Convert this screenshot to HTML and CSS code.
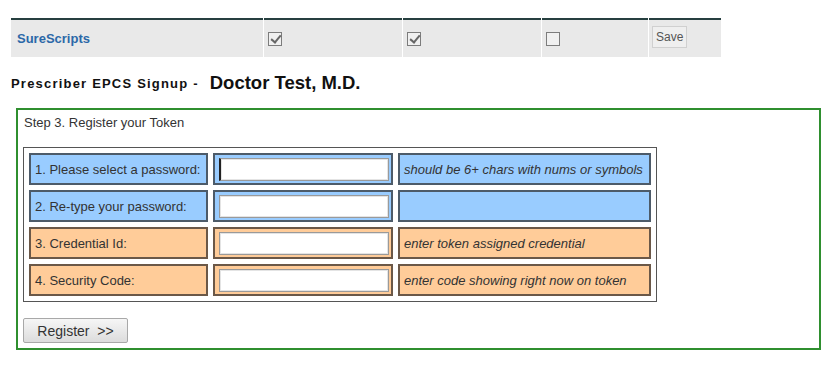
FILE: index.html
```html
<!DOCTYPE html>
<html>
<head>
    <meta charset="UTF-8">
    <link rel="stylesheet" href="styles.css">
</head>
<body>
<table class="service-table">
    <tr>
        <td class="service-name">SureScripts</td>
        <td class="col-check"><span class="check checked"></span></td>
        <td class="col-check"><span class="check checked"></span></td>
        <td class="col-check-narrow"><span class="check"></span></td>
        <td class="col-save"><button class="save-btn">Save</button></td>
    </tr>
</table>

<div class="page-title">
    <span class="title-label">Prescriber EPCS Signup -</span>
    <span class="title-name">Doctor Test, M.D.</span>
</div>

<div class="signup-box">
    <div class="step-title">Step 3. Register your Token</div>

    <table class="token-table">
        <tr class="row-blue">
            <td class="cell-label">1. Please select a password:</td>
            <td class="cell-input"><input type="password" class="token-input first"></td>
            <td class="cell-hint">should be 6+ chars with nums or symbols</td>
        </tr>
        <tr class="row-blue">
            <td class="cell-label">2. Re-type your password:</td>
            <td class="cell-input"><input type="password" class="token-input"></td>
            <td class="cell-hint"></td>
        </tr>
        <tr class="row-orange">
            <td class="cell-label">3. Credential Id:</td>
            <td class="cell-input"><input type="text" class="token-input"></td>
            <td class="cell-hint">enter token assigned credential</td>
        </tr>
        <tr class="row-orange">
            <td class="cell-label">4. Security Code:</td>
            <td class="cell-input"><input type="text" class="token-input"></td>
            <td class="cell-hint">enter code showing right now on token</td>
        </tr>
    </table>

    <button class="register-btn">Register &nbsp;&gt;&gt;</button>
</div>
</body>
</html>
```

FILE: styles.css
```css
* {
    box-sizing: border-box;
}

body {
    margin: 0;
    padding: 18px 0 0 11px;
    background: #fff;
    color: #333;
    font-family: 'Liberation Sans', Arial, sans-serif;
}

/* Service row */
.service-table {
    border-collapse: separate;
    border-spacing: 1px 0;
    margin-left: -1px;
}

.service-table td {
    height: 39px;
    background: #e9e9e9;
    border-top: 2px solid #263f40;
    padding: 0;
    vertical-align: middle;
}

.service-name {
    width: 252px;
    padding-left: 6px !important;
    font-size: 13px;
    font-weight: bold;
    color: #2c68a8;
}

.col-check {
    width: 138px;
}

.col-check-narrow {
    width: 106px;
}

.col-save {
    width: 72px;
    vertical-align: top !important;
}

.check {
    display: block;
    width: 14px;
    height: 14px;
    margin-left: 4px;
    border: 1px solid #7c7c7c;
    background: #f0f0f0;
    position: relative;
}

.check.checked::after {
    content: '';
    position: absolute;
    left: 4px;
    top: 0;
    width: 4px;
    height: 8px;
    border: solid #666;
    border-width: 0 2px 2px 0;
    transform: rotate(40deg);
}

.save-btn {
    margin: 6px 0 0 3px;
    padding: 2px 3px;
    height: 22px;
    font-family: 'Liberation Sans', Arial, sans-serif;
    font-size: 12px;
    color: #555;
    background: #efefef;
    border: 1px solid #d0d0d0;
}

/* Title */
.page-title {
    margin-top: 15px;
    height: 22px;
    display: flex;
    align-items: center;
    gap: 11px;
    font-weight: bold;
    color: #111;
}

.title-label {
    font-size: 13px;
    letter-spacing: 1.2px;
}

.title-name {
    font-size: 18.5px;
}

/* Signup box */
.signup-box {
    margin: 14px 0 0 5px;
    width: 805px;
    border: 2px solid #2f8f2f;
    padding: 5px;
}

.step-title {
    font-size: 13px;
    line-height: 16px;
    padding-left: 1px;
}

.token-table {
    margin-top: 16px;
    border: 1px solid #555;
    border-spacing: 5px;
    font-size: 13px;
}

.token-table td {
    height: 32px;
    padding: 0 4px;
    vertical-align: middle;
}

.row-blue td {
    background: #99ccff;
    border: 2px solid #4d5b69;
}

.row-orange td {
    background: #ffcc99;
    border: 2px solid #6b5848;
}

.cell-label {
    width: 179px;
}

.token-table td.cell-input {
    width: 180px;
    padding: 0 2px 0 4px;
}

.cell-hint {
    width: 253px;
    font-style: italic;
    white-space: nowrap;
}

.token-input {
    display: block;
    width: 170px;
    height: 23px;
    margin: 0;
    border: 1px solid #9a9a9a;
    box-shadow: inset 0 0 0 1px #e4e4e4;
    background: #fff;
}

.token-input.first {
    border-left: 2px solid #222;
}

.register-btn {
    margin-top: 16px;
    width: 105px;
    height: 25px;
    font-family: 'Liberation Sans', Arial, sans-serif;
    font-size: 14px;
    color: #333;
    background: linear-gradient(#f6f6f6, #dcdcdc);
    border: 1px solid #a8a8a8;
    border-radius: 2px;
}
```
